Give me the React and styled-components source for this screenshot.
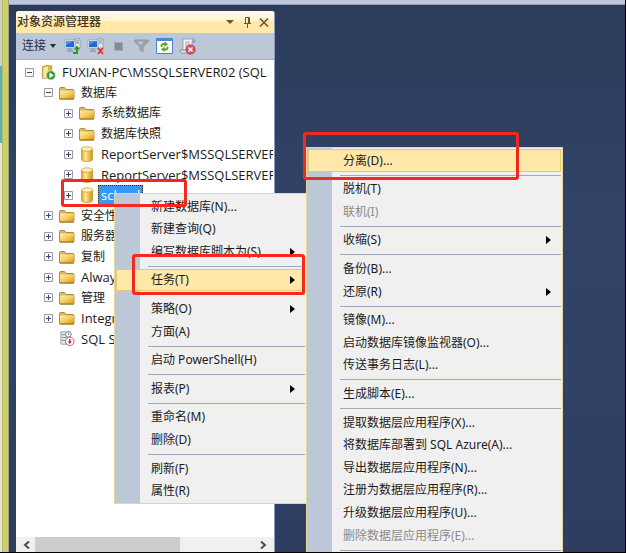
import React from "react";
import styled, { createGlobalStyle } from "styled-components";

const GlobalStyle = createGlobalStyle`
  *, *::before, *::after { box-sizing: border-box; }
  body {
    margin: 0;
    font-family: "Open Sans", "Noto Sans CJK SC", sans-serif;
    font-size: 12px;
    line-height: 16px;
    color: #1b1b1b;
  }
  button { font: inherit; color: inherit; border: 0; background: none; padding: 0; margin: 0; }
`;

const Window = styled.main`
  position: relative;
  display: flex;
  height: 100vh;
  overflow: hidden;
  border-right: 1px solid #000;
  border-bottom: 1px solid #000;
  background: #2d3d5e;
`;

const Backdrop = styled.div`
  flex: none;
  width: 2px;
  background: linear-gradient(#ccd3c4 66px, #58b3b4 66px 143px, #e2e5cb 143px);
`;

const Frame = styled.div`
  flex: none;
  width: 7px;
  background: #cfce6c;
  border-left: 1px solid #b5b866;
  border-right: 1px solid #a0a578;
`;

const Workspace = styled.div`
  flex: 1;
  min-width: 0;
  display: flex;
  flex-direction: column;
  background: linear-gradient(#2b3c5b, #314468 40%, #2d3e60);
`;

const TopEdge = styled.div`
  flex: none;
  height: 5px;
  background: #bcc7dc;
  border-bottom: 1px solid #93a2bc;
`;

const Panel = styled.section`
  flex: 1;
  min-height: 0;
  width: 259px;
  margin: 6px 0 0 7px;
  display: flex;
  flex-direction: column;
  border-radius: 3px 3px 0 0;
  border-right: 1px solid #8e9bbc;
  background: #fff;
  overflow: hidden;
`;

const PanelHeader = styled.header`
  flex: none;
  display: flex;
  align-items: center;
  height: 22px;
  padding: 0 4px 0 1px;
  background: linear-gradient(#fffaf0, #fff2cf 45%, #ffe8a8 50%, #ffe8a8);
`;

const PanelTitle = styled.h1`
  flex: 1;
  margin: 0;
  font-size: 12px;
  font-weight: 500;
  color: #40351c;
`;

const HeaderButtons = styled.div`
  display: flex;
  gap: 5px;
`;

const HeaderButton = styled.button`
  display: flex;
  align-items: center;
  justify-content: center;
  width: 12px;
  height: 16px;
`;

const Toolbar = styled.div`
  flex: none;
  display: flex;
  align-items: center;
  gap: 6px;
  height: 27px;
  padding: 0 6px;
  background: #bcc7d8;
  border-bottom: 1px solid #a3acbd;
`;

const ConnectButton = styled.button`
  display: flex;
  align-items: center;
  gap: 4px;
  margin-right: 2px;
  color: #1f2c48;
`;

const ToolButton = styled.button`
  display: flex;
  width: 17px;
  height: 18px;
  align-items: center;
  justify-content: center;
`;

const Tree = styled.ul`
  flex: 1;
  min-height: 0;
  display: grid;
  grid-auto-rows: 20px 21px;
  align-content: start;
  margin: 0 1px 0 0;
  padding: 2px 0 0;
  list-style: none;
  overflow: hidden;
`;

const indents = [9, 28, 48];

const TreeRow = styled.li`
  display: flex;
  align-items: center;
  gap: 6px;
  padding-left: ${(p) => indents[p.$level]}px;
  white-space: nowrap;
`;

const Toggle = styled.button`
  flex: none;
  display: flex;
  width: 9px;
  height: 9px;
  visibility: ${(p) => (p.$hidden ? "hidden" : "visible")};
`;

const NodeIcon = styled.span`
  flex: none;
  display: flex;
  width: 16px;
`;

const NodeLabel = styled.span`
  font-size: ${(p) => (p.$latin ? 13 : 12)}px;
  ${(p) =>
    p.$selected &&
    `
    margin-left: -3px;
    padding: 1px 2px;
    border: 1px dotted #4a3010;
    background: #3399ff;
    color: #fff;
  `}
`;

const ScrollTrack = styled.div`
  flex: none;
  display: flex;
  height: 15px;
  padding: 0 2px;
  background: #f0f0f0;
`;

const ScrollButton = styled.button`
  display: flex;
  align-items: center;
  justify-content: center;
  width: 17px;
`;

const ScrollLane = styled.div`
  flex: 1;
`;

const ScrollThumb = styled.div`
  width: 66%;
  height: 100%;
  background: #cdcdcd;
`;

const Menu = styled.div`
  position: absolute;
  display: flex;
  flex-direction: column;
  padding: 1px;
  border: 1px solid #e5d795;
  background: linear-gradient(to right, #bcc7d8 25px, #f0f0f0 25px);
  font-family: "Noto Sans", "Noto Sans CJK SC", sans-serif;
`;

const ContextMenu = styled(Menu)`
  left: 114px;
  top: 193px;
  width: 193px;
`;

const SubMenu = styled(Menu)`
  left: 306px;
  top: 147px;
  width: 257px;
`;

const MenuItem = styled.button`
  flex: none;
  display: flex;
  align-items: center;
  justify-content: space-between;
  height: 23px;
  padding: 0 9px 0 34px;
  border: 1px solid ${(p) => (p.$active ? "#e5c873" : "transparent")};
  background: ${(p) => (p.$active ? "#ffe8a9" : "none")};
  white-space: nowrap;
  text-align: left;
  &:nth-of-type(5n + 2),
  &:nth-of-type(5n + 4) {
    height: 22px;
  }
  &:disabled { color: #8b8b8b; }
`;

const Separator = styled.hr`
  flex: none;
  width: auto;
  height: 1px;
  margin: 3px 0 2px 32px;
  border: 0;
  background: #a0a8bd;
`;

const Highlight = styled.div`
  position: absolute;
  border: 3px solid #f4281e;
  border-radius: 3px;
  pointer-events: none;
`;

const NodeHighlight = styled(Highlight)`
  left: 61px;
  top: 179px;
  width: 126px;
  height: 28px;
`;

const TaskHighlight = styled(Highlight)`
  left: 132px;
  top: 254px;
  width: 173px;
  height: 41px;
`;

const DetachHighlight = styled(Highlight)`
  left: 303px;
  top: 132px;
  width: 216px;
  height: 48px;
`;

const Caret = ({ color = "#1f2c48", size = 6 }) => (
  <svg width={size} height="4" viewBox="0 0 8 4" preserveAspectRatio="none" aria-hidden="true">
    <path d="M0 0h8L4 4z" fill={color} />
  </svg>
);

const PinIcon = () => (
  <svg width="9" height="12" viewBox="0 0 9 12" fill="none" stroke="#6b572b" aria-hidden="true">
    <path d="M2.5 7V1.5h4V7M5.5 1.5V7M1 7.5h7M4.5 8v4" />
  </svg>
);

const CloseIcon = () => (
  <svg width="10" height="9" viewBox="0 0 10 9" aria-hidden="true">
    <path d="M1 .5l8 8M9 .5l-8 8" stroke="#6b572b" strokeWidth="1.6" />
  </svg>
);

const Computers = () => (
  <>
    <path d="M11 1h5v9h-5z" fill="#e9edf2" stroke="#7f8a9b" strokeWidth=".7" />
    <path d="M12 3h3M12 5h3" stroke="#77839a" />
    <path d="M1 2h10v8H1z" fill="#e8f0fa" stroke="#8594ad" strokeWidth=".6" />
    <path d="M2 3h8v6H2z" fill="#2267d1" />
    <path d="M2 3h8L2 7z" fill="#4b91ec" />
    <path d="M4 10h4v2H4z" fill="#9aa7bd" />
    <path d="M3 13h6" stroke="#77859c" strokeWidth="1.2" />
  </>
);

const ConnectIcon = () => (
  <svg width="17" height="17" viewBox="0 0 17 17" aria-hidden="true">
    <Computers />
    <path d="M9 15h4v-4" fill="none" stroke="#28952e" strokeWidth="2" />
    <path d="M10 11.5l3-4 3 4z" fill="#28952e" />
  </svg>
);

const DisconnectIcon = () => (
  <svg width="17" height="17" viewBox="0 0 17 17" aria-hidden="true">
    <Computers />
    <path d="M11 10l5 6M16 10l-5 6" stroke="#e62b2b" strokeWidth="1.8" />
  </svg>
);

const StopIcon = () => (
  <svg width="9" height="9" viewBox="0 0 9 9" aria-hidden="true">
    <path d="M.5.5h8v8h-8z" fill="#858b95" stroke="#a2a9b4" />
  </svg>
);

const FilterIcon = () => (
  <svg width="15" height="14" viewBox="0 0 15 14" aria-hidden="true">
    <path d="M.5 1h14v1.5L9 7.5V13l-3-1.5v-4L.5 2.500z" fill="#9ba1aa" stroke="#929aa5" />
    <path d="M3 2.500h7L7 6z" fill="#c0c6cf" />
  </svg>
);

const RefreshIcon = () => (
  <svg width="17" height="16" viewBox="0 0 17 16" aria-hidden="true">
    <path d="M.5.5h16v15H.5z" fill="#fff" stroke="#4c83cd" />
    <path d="M1 1h15v2H1z" fill="#4a8be0" />
    <path d="M5.5 9V8q0-2 2-2H9" fill="none" stroke="#5da51b" strokeWidth="1.8" />
    <path d="M8.500 3.500L12 6 8.500 9z" fill="#5da51b" />
    <path d="M11.500 8.500v1q0 2-2 2H8" fill="none" stroke="#5da51b" strokeWidth="1.8" />
    <path d="M8.500 8.500L5 11.500l3.500 2.500z" fill="#5da51b" />
  </svg>
);

const ScriptIcon = () => (
  <svg width="17" height="17" viewBox="0 0 17 17" aria-hidden="true">
    <path d="M4 1h10q2 0 2 3h-3v8H4z" fill="#f5f6f9" stroke="#8b94a7" strokeWidth=".8" />
    <path d="M13 4q0-3 1.500-3T16 4z" fill="#a9b5cb" stroke="#7f8ba2" strokeWidth=".6" />
    <path d="M6 4h5M6 6h5M6 8h4" stroke="#8a96ad" strokeWidth=".8" />
    <path d="M1 12h8v3H3q-2 0-2-3z" fill="#dfe4ee" stroke="#77839a" strokeWidth=".8" />
    <circle cx="11.500" cy="11.500" r="4.800" fill="#d8515a" stroke="#b8434d" strokeWidth=".6" />
    <path d="M9.500 9.500l4 4M13.500 9.500l-4 4" stroke="#fff" strokeWidth="1.500" />
  </svg>
);

const ToggleIcon = ({ open }) => (
  <svg width="9" height="9" viewBox="0 0 9 9" aria-hidden="true">
    <path d="M.5.5h8v8h-8z" fill="#f8f8f8" stroke="#9c9c9c" />
    <path d={open ? "M2 4.500h5" : "M2 4.500h5M4.500 2v5"} stroke="#35487e" />
  </svg>
);

const FolderIcon = () => (
  <svg width="16" height="14" viewBox="0 0 16 14" aria-hidden="true">
    <defs>
      <linearGradient id="folder" x1="0" y1="0" x2="1" y2="1">
        <stop offset="0" stopColor="#ffeeb0" />
        <stop offset=".5" stopColor="#f5cf5c" />
        <stop offset="1" stopColor="#d9980c" />
      </linearGradient>
    </defs>
    <path d="M.5 12V2.500q0-1 1-1h4l1.500 2h7q1 0 1 1V12q0 1-1 1h-13q-1 0-1-1z" fill="#dcb765" stroke="#b08a3c" />
    <path d="M1 4.500h14v8H1z" fill="url(#folder)" />
    <path d="M1 13h14" stroke="#94702b" />
  </svg>
);

const DatabaseIcon = () => (
  <svg width="16" height="16" viewBox="0 0 16 16" aria-hidden="true">
    <defs>
      <linearGradient id="cylinder">
        <stop offset="0" stopColor="#dca11c" />
        <stop offset=".35" stopColor="#ffea9c" />
        <stop offset="1" stopColor="#cf9212" />
      </linearGradient>
    </defs>
    <path d="M2.500 3v10.500c0 1.300 2.500 2 5.500 2s5.500-.7 5.500-2V3z" fill="url(#cylinder)" stroke="#c9952a" strokeWidth=".8" />
    <ellipse cx="8" cy="3" rx="5.500" ry="2.200" fill="#fff0b5" stroke="#d0a33c" strokeWidth=".8" />
  </svg>
);

const ServerIcon = () => (
  <svg width="17" height="17" viewBox="0 0 17 17" aria-hidden="true">
    <path d="M2.500 2.500Q7 0 12.500 1.500v13h-10z" fill="#e3b54c" stroke="#c2963a" />
    <path d="M3.500 3.500Q6 2 8.500 2v12h-5z" fill="#fae5a2" />
    <circle cx="11.500" cy="11.500" r="5" fill="#3b9c38" stroke="#ddebd5" />
    <path d="M10 8.500l4.500 3-4.500 3z" fill="#fff" />
  </svg>
);

const AgentIcon = () => (
  <svg width="17" height="17" viewBox="0 0 17 17" aria-hidden="true">
    <path d="M2 1.500h7v13H2z" fill="#e9ebf0" stroke="#8e96a7" />
    <path d="M3 4.500h5M3 7.500h5M3 10.500h4" stroke="#7887a2" />
    <circle cx="10" cy="4" r="3" fill="#fff" stroke="#748097" />
    <path d="M10 2v2h1.500" fill="none" stroke="#51617e" strokeWidth=".8" />
    <circle cx="11.500" cy="11.500" r="4.500" fill="#fff" stroke="#b55568" />
    <path d="M11.500 9v4" stroke="#d72b3f" strokeWidth="1.600" />
    <path d="M9.500 11.500h4l-2 3z" fill="#d72b3f" />
  </svg>
);

const ArrowIcon = () => (
  <svg width="5" height="8" viewBox="0 0 5 8" aria-hidden="true">
    <path d="M0 0l5 4-5 4z" fill="#000" />
  </svg>
);

const Chevron = ({ right }) => (
  <svg width="7" height="8" viewBox="0 0 7 8" aria-hidden="true">
    <path d={right ? "M1 .5L5 4 1 7.500" : "M6 .5L2 4l4 3.500"} fill="none" stroke="#4c4c4c" strokeWidth="2" />
  </svg>
);

const icons = { folder: FolderIcon, database: DatabaseIcon, server: ServerIcon, agent: AgentIcon };

const nodes = [
  { level: 0, icon: "server", label: "FUXIAN-PC\\MSSQLSERVER02 (SQL", open: true, latin: true },
  { level: 1, icon: "folder", label: "数据库", open: true },
  { level: 2, icon: "folder", label: "系统数据库" },
  { level: 2, icon: "folder", label: "数据库快照" },
  { level: 2, icon: "database", label: "ReportServer$MSSQLSERVER", latin: true },
  { level: 2, icon: "database", label: "ReportServer$MSSQLSERVER", latin: true },
  { level: 2, icon: "database", label: "school", selected: true, latin: true },
  { level: 1, icon: "folder", label: "安全性" },
  { level: 1, icon: "folder", label: "服务器" },
  { level: 1, icon: "folder", label: "复制" },
  { level: 1, icon: "folder", label: "Always", latin: true },
  { level: 1, icon: "folder", label: "管理" },
  { level: 1, icon: "folder", label: "Integr", latin: true },
  { level: 1, icon: "agent", label: "SQL S", leaf: true, latin: true },
];

const contextItems = [
  { label: "新建数据库(N)..." },
  { label: "新建查询(Q)" },
  { label: "编写数据库脚本为(S)", sub: true },
  null,
  { label: "任务(T)", sub: true, active: true },
  null,
  { label: "策略(O)", sub: true },
  { label: "方面(A)" },
  null,
  { label: "启动 PowerShell(H)" },
  null,
  { label: "报表(P)", sub: true },
  null,
  { label: "重命名(M)" },
  { label: "删除(D)" },
  null,
  { label: "刷新(F)" },
  { label: "属性(R)" },
];

const taskItems = [
  { label: "分离(D)...", active: true },
  null,
  { label: "脱机(T)" },
  { label: "联机(I)", disabled: true },
  null,
  { label: "收缩(S)", sub: true },
  null,
  { label: "备份(B)..." },
  { label: "还原(R)", sub: true },
  null,
  { label: "镜像(M)..." },
  { label: "启动数据库镜像监视器(O)..." },
  { label: "传送事务日志(L)..." },
  null,
  { label: "生成脚本(E)..." },
  null,
  { label: "提取数据层应用程序(X)..." },
  { label: "将数据库部署到 SQL Azure(A)..." },
  { label: "导出数据层应用程序(N)..." },
  { label: "注册为数据层应用程序(R)..." },
  { label: "升级数据层应用程序(U)..." },
  { label: "删除数据层应用程序(E)...", disabled: true },
  null,
];

const MenuEntries = ({ items }) =>
  items.map((item, i) =>
    item ? (
      <MenuItem key={i} role="menuitem" $active={item.active} disabled={item.disabled}>
        {item.label}
        {item.sub && <ArrowIcon />}
      </MenuItem>
    ) : (
      <Separator key={i} />
    )
  );

export default function App() {
  return (
    <>
      <GlobalStyle />
      <Window>
        <Backdrop />
        <Frame />
        <Workspace>
          <TopEdge />
          <Panel>
            <PanelHeader>
              <PanelTitle>对象资源管理器</PanelTitle>
              <HeaderButtons>
                <HeaderButton aria-label="窗口位置"><Caret color="#6b572b" size={8} /></HeaderButton>
                <HeaderButton aria-label="自动隐藏"><PinIcon /></HeaderButton>
                <HeaderButton aria-label="关闭"><CloseIcon /></HeaderButton>
              </HeaderButtons>
            </PanelHeader>
            <Toolbar>
              <ConnectButton>连接<Caret /></ConnectButton>
              <ToolButton aria-label="连接"><ConnectIcon /></ToolButton>
              <ToolButton aria-label="断开连接"><DisconnectIcon /></ToolButton>
              <ToolButton aria-label="停止"><StopIcon /></ToolButton>
              <ToolButton aria-label="筛选器"><FilterIcon /></ToolButton>
              <ToolButton aria-label="刷新"><RefreshIcon /></ToolButton>
              <ToolButton aria-label="脚本错误"><ScriptIcon /></ToolButton>
            </Toolbar>
            <Tree>
              {nodes.map((node, i) => {
                const Icon = icons[node.icon];
                return (
                  <TreeRow key={i} $level={node.level}>
                    <Toggle $hidden={node.leaf} aria-label={node.open ? "折叠" : "展开"}>
                      <ToggleIcon open={node.open} />
                    </Toggle>
                    <NodeIcon><Icon /></NodeIcon>
                    <NodeLabel $selected={node.selected} $latin={node.latin}>{node.label}</NodeLabel>
                  </TreeRow>
                );
              })}
            </Tree>
            <ScrollTrack>
              <ScrollButton aria-label="向左滚动"><Chevron /></ScrollButton>
              <ScrollLane><ScrollThumb /></ScrollLane>
              <ScrollButton aria-label="向右滚动"><Chevron right /></ScrollButton>
            </ScrollTrack>
          </Panel>
        </Workspace>
        <ContextMenu role="menu"><MenuEntries items={contextItems} /></ContextMenu>
        <SubMenu role="menu"><MenuEntries items={taskItems} /></SubMenu>
        <NodeHighlight />
        <TaskHighlight />
        <DetachHighlight />
      </Window>
    </>
  );
}
